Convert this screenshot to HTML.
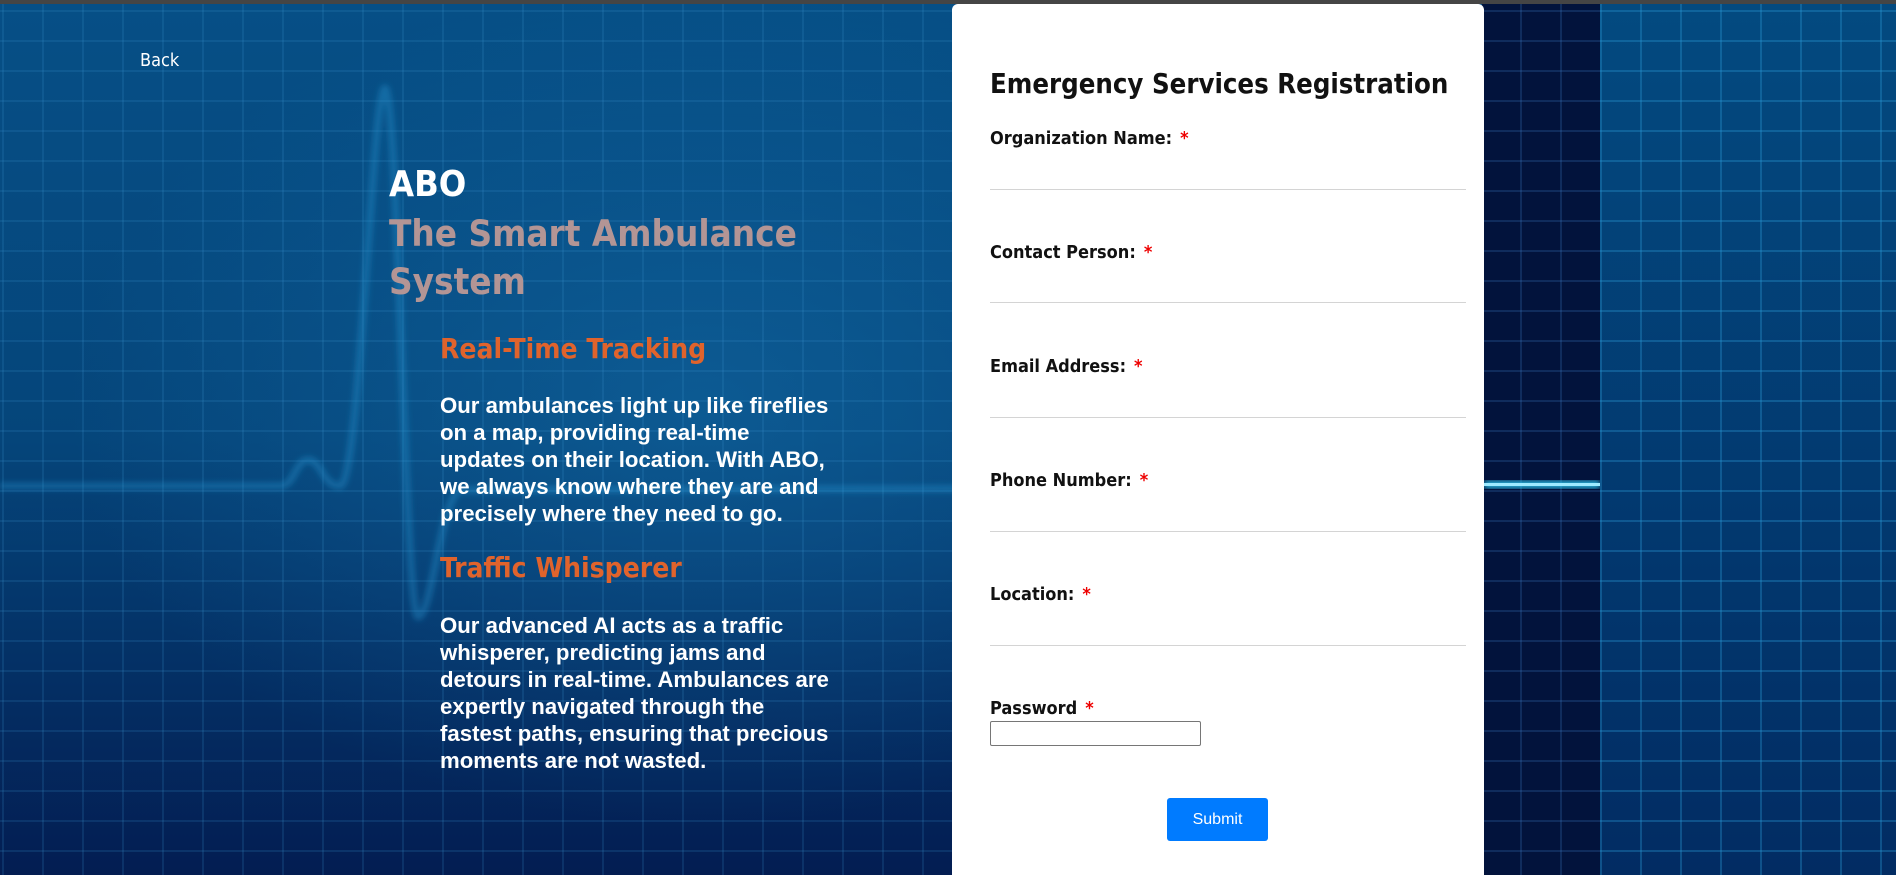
<!DOCTYPE html>
<html><head><meta charset="utf-8"><style>
html,body{margin:0;padding:0;width:1896px;height:875px;overflow:hidden;}
body{position:relative;background:#04306a;font-family:"Liberation Sans",sans-serif;}
.bg{position:absolute;left:0;top:4px;width:1896px;height:871px;
background:
 radial-gradient(ellipse 900px 600px at 700px 400px, rgba(20,110,170,0.5), rgba(0,0,0,0) 70%),
 linear-gradient(180deg,#064f86 0%,#05457a 50%,#031d52 100%);}
.grid{position:absolute;left:0;top:4px;width:1896px;height:871px;
background-image:
 linear-gradient(90deg, rgba(60,150,210,0.17) 2px, transparent 2px),
 linear-gradient(180deg, rgba(60,150,210,0.17) 2px, transparent 2px);
background-size:40px 30px;background-position:2px 6px;}
.dark{position:absolute;left:1482px;top:4px;width:118px;height:871px;background:#02133c;
background-image:linear-gradient(90deg, rgba(60,120,190,0.25) 2px, transparent 2px),linear-gradient(180deg, rgba(60,120,190,0.25) 2px, transparent 2px);background-size:40px 30px;background-position:38px 6px;}
.right{position:absolute;left:1600px;top:4px;width:296px;height:871px;
background-image:linear-gradient(90deg, rgba(40,150,210,0.35) 2px, transparent 2px),linear-gradient(180deg, rgba(40,150,210,0.35) 2px, transparent 2px),linear-gradient(180deg,#034a80,#022c63);background-size:40px 30px,40px 30px,100% 100%;background-position:0 6px,0 6px,0 0;}
.topbar{position:absolute;left:0;top:0;width:1896px;height:4px;background:#454545;}
.txt{position:absolute;color:#fff;}
.card{position:absolute;left:952px;top:4px;width:532px;height:880px;background:#fff;border-radius:6px;}
.lbl{position:absolute;left:38px;font-size:18px;font-weight:bold;color:#111;font-family:"DejaVu Sans Condensed","Liberation Sans",sans-serif;}
.lbl b{color:#e00;margin-left:8px;}
.ln{position:absolute;left:38px;width:476px;height:1px;background:#d4d4d4;}
.para{position:absolute;left:440px;font-size:22.2px;font-weight:bold;line-height:27px;color:#fff;white-space:nowrap;}
.h{font-family:'DejaVu Sans Condensed','Liberation Sans',sans-serif;font-weight:bold;position:absolute;}
</style></head><body>
<div class="bg"></div>
<div class="grid"></div>
<svg style="position:absolute;left:0;top:0" width="1896" height="875">
<defs><filter id="g"><feGaussianBlur stdDeviation="3"/></filter></defs>
<path d="M0 486 L280 486 C295 486 295 460 308 460 C322 460 322 486 340 486 C360 486 372 88 385 88 C398 88 405 617 418 617 C432 617 440 500 460 490 L1896 486" stroke="rgba(40,160,220,0.35)" stroke-width="7" fill="none" filter="url(#g)"/>
<path d="M0 486 L1480 486" stroke="rgba(90,200,255,0.25)" stroke-width="3" fill="none" filter="url(#g)"/>
</svg>
<div class="dark"></div>
<div class="right"></div>
<svg style="position:absolute;left:1484px;top:478px" width="116" height="16"><rect x="0" y="3" width="116" height="7" fill="#2fc8f0" filter="url(#g)"/><rect x="0" y="5" width="116" height="3" fill="#9eeaff"/></svg>
<div class="topbar"></div>
<div class="txt" style="left:140px;top:50px;font-size:18px;font-family:'DejaVu Sans Condensed','Liberation Sans',sans-serif;">Back</div>
<div class="txt h" style="left:389px;top:164px;font-size:36px;">ABO</div>
<div class="txt h" style="left:389px;top:210px;font-size:36.5px;color:#b39595;line-height:48px;">The Smart Ambulance<br>System</div>
<div class="txt h" style="left:440px;top:332px;font-size:28px;color:#e0632c;">Real-Time Tracking</div>
<div class="para" style="top:392px;">Our ambulances light up like fireflies<br>on a map, providing real-time<br>updates on their location. With ABO,<br>we always know where they are and<br>precisely where they need to go.</div>
<div class="txt h" style="left:440px;top:551px;font-size:28px;color:#e0632c;">Traffic Whisperer</div>
<div class="para" style="top:612px;">Our advanced AI acts as a traffic<br>whisperer, predicting jams and<br>detours in real-time. Ambulances are<br>expertly navigated through the<br>fastest paths, ensuring that precious<br>moments are not wasted.</div>
<div class="card">
<div class="h" style="left:38px;top:65px;font-size:27.3px;color:#111;">Emergency Services Registration</div>
<div class="lbl" style="top:124px">Organization Name:<b>*</b></div><div class="ln" style="top:185px"></div>
<div class="lbl" style="top:238px">Contact Person:<b>*</b></div><div class="ln" style="top:298px"></div>
<div class="lbl" style="top:352px">Email Address:<b>*</b></div><div class="ln" style="top:413px"></div>
<div class="lbl" style="top:466px">Phone Number:<b>*</b></div><div class="ln" style="top:527px"></div>
<div class="lbl" style="top:580px">Location:<b>*</b></div><div class="ln" style="top:641px"></div>
<div class="lbl" style="top:694px">Password<b>*</b></div>
<div style="position:absolute;left:38px;top:717px;width:209px;height:23px;border:1px solid #767676;border-radius:2px;"></div>
<div style="position:absolute;left:215px;top:794px;width:101px;height:43px;background:#007bff;border-radius:3px;color:#fff;font-size:16px;line-height:43px;text-align:center;">Submit</div>
</div>
</body></html>
